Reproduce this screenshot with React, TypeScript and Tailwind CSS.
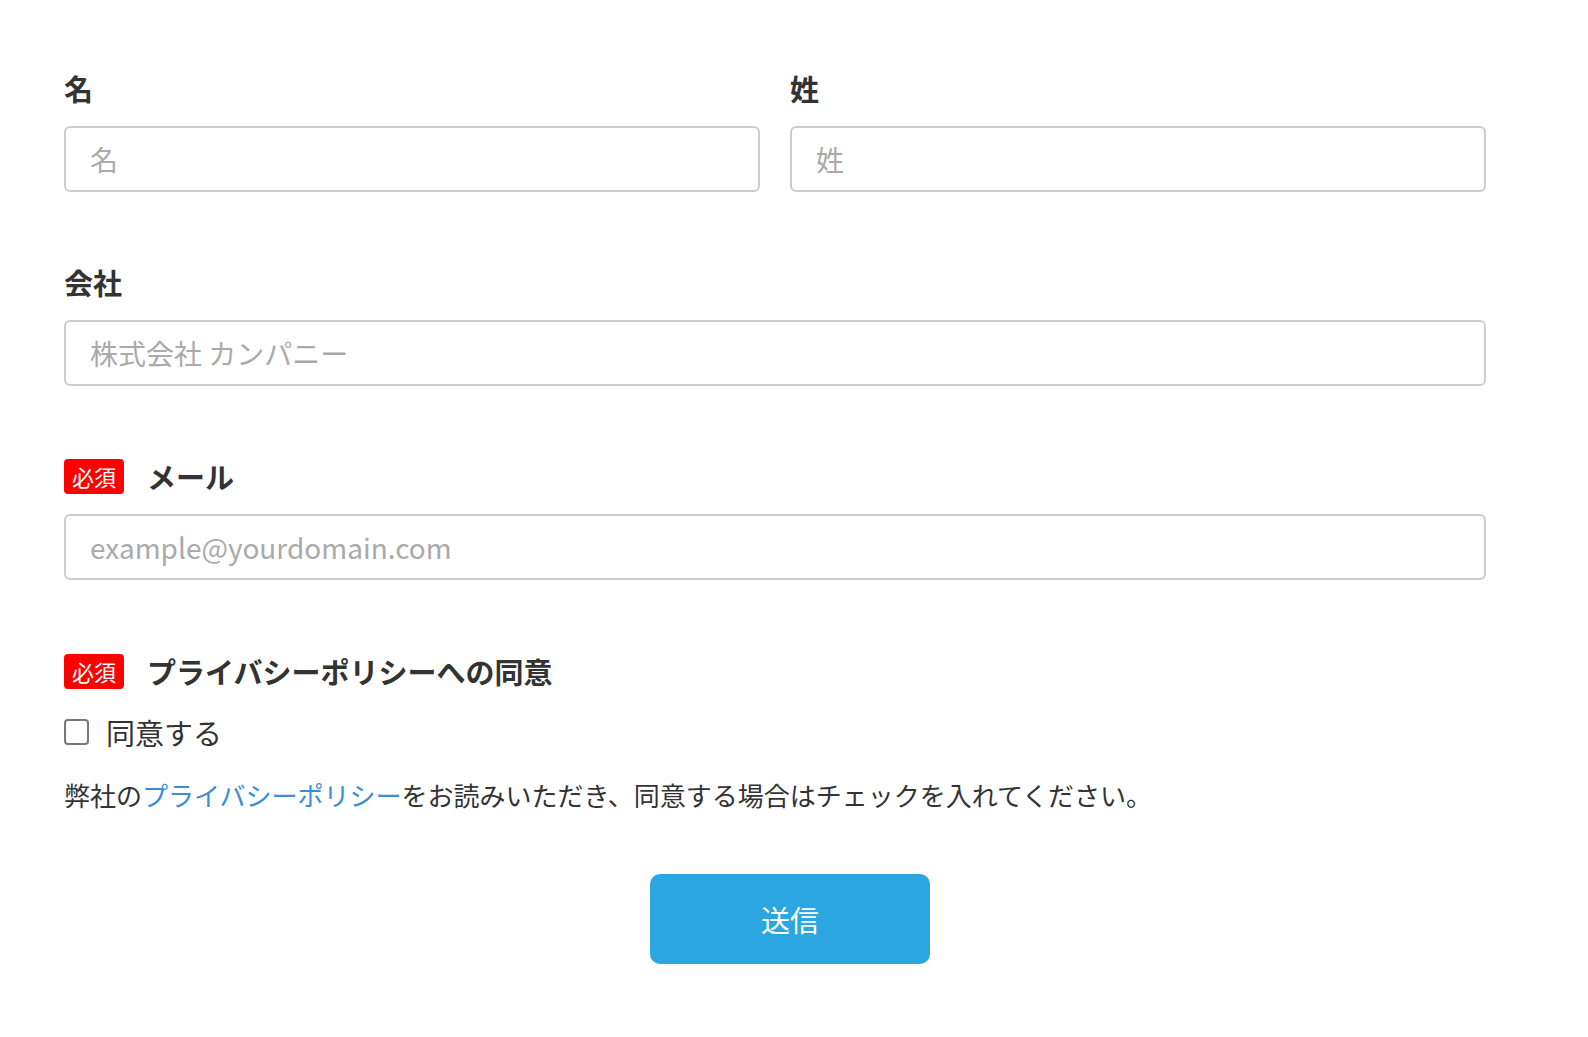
import React from "react";

const font = { fontFamily: '"Noto Sans CJK JP", "Noto Sans", sans-serif' };

function Required() {
  return (
    <span className="inline-flex items-center justify-center w-[60px] h-[35px] rounded-[4px] bg-[#ff0000] text-white text-[22px] leading-none mr-[23px]">
      必須
    </span>
  );
}

function Label({ children, required }: { children: React.ReactNode; required?: boolean }) {
  return (
    <div className="h-[44px] flex items-center mb-[16px]">
      {required && <Required />}
      <span className="text-[29px] font-bold text-[#333333] leading-none">{children}</span>
    </div>
  );
}

function Input({ placeholder }: { placeholder: string }) {
  return (
    <input
      type="text"
      placeholder={placeholder}
      className="w-full h-[66px] border-2 border-[#cccccc] rounded-[6px] px-[24px] text-[28px] text-[#333333] placeholder:text-[#aaaaaa] outline-none bg-white"
      style={font}
    />
  );
}

export default function App() {
  return (
    <div className="min-h-screen bg-white px-[64px] pt-[66px] pb-[60px]" style={font}>
      <div className="w-[1422px]">
        <div className="flex gap-[30px]">
          <div className="flex-1">
            <Label>名</Label>
            <Input placeholder="名" />
          </div>
          <div className="flex-1">
            <Label>姓</Label>
            <Input placeholder="姓" />
          </div>
        </div>

        <div className="mt-[68px]">
          <Label>会社</Label>
          <Input placeholder="株式会社 カンパニー" />
        </div>

        <div className="mt-[68px]">
          <Label required>メール</Label>
          <Input placeholder="example@yourdomain.com" />
        </div>

        <div className="mt-[69px]">
          <div className="h-[44px] flex items-center">
            <Required />
            <span className="text-[29px] font-bold text-[#333333] leading-none">プライバシーポリシーへの同意</span>
          </div>
          <label className="mt-[19px] h-[40px] flex items-center">
            <span className="w-[25px] h-[26px] border-2 border-[#777777] rounded-[4px] bg-white mr-[17px]" />
            <span className="text-[29px] text-[#333333] leading-none">同意する</span>
          </label>
          <p className="mt-[25px] h-[36px] flex items-center text-[26px] text-[#333333] leading-none">
            弊社の<span className="text-[#3a8dd6]">プライバシーポリシー</span>をお読みいただき、同意する場合はチェックを入れてください。
          </p>
        </div>
      </div>

      <div className="mt-[61px] w-[1452px] flex justify-center">
        <button className="w-[280px] h-[90px] rounded-[10px] bg-[#2ca6e0] text-white text-[29px] leading-none">
          送信
        </button>
      </div>
    </div>
  );
}
